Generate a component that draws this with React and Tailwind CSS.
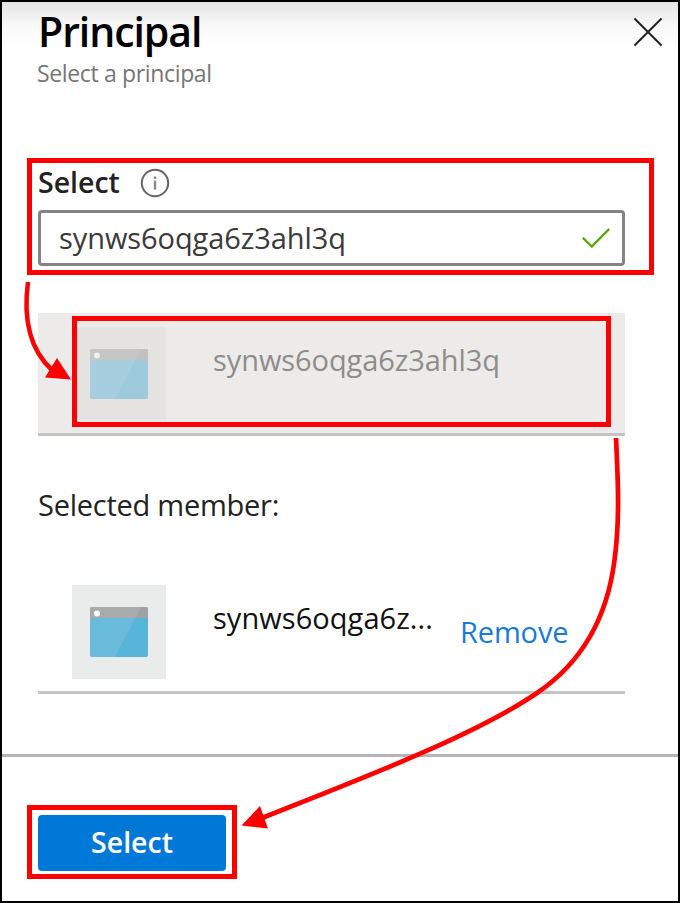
function AppIcon({ className }) {
  return (
    <svg viewBox="0 0 58 50" className={className} fill="none">
      <rect width="58" height="50" rx="2" fill="#59b4d9" />
      <path d="M2 0h54a2 2 0 0 1 2 2v9H0V2a2 2 0 0 1 2-2z" fill="#a0a1a2" />
      <path d="M2 0h49L25 50H2a2 2 0 0 1-2-2V2a2 2 0 0 1 2-2z" fill="#fff" fillOpacity="0.1" />
      <circle cx="7" cy="6.5" r="3" fill="#fff" />
    </svg>
  );
}

function Header() {
  return (
    <header className="flex h-[156px] items-start justify-between bg-linear-to-b from-[#e4e4e4] from-0% via-[#f7f7f7] via-[14%] to-white to-[29%] pt-[2px] pr-[15px] pl-[36px]">
      <div>
        <h1 className="text-[41px] leading-[54px] font-semibold tracking-[-1.050px] text-black">Principal</h1>
        <p className="-ml-[1px] text-[23px] leading-[30px] tracking-[-0.350px] text-[#767676]">Select a principal</p>
      </div>
      <svg viewBox="0 0 30 30" className="mt-[13px] h-[30px] w-[30px]" stroke="#222" strokeWidth="2">
        <path d="M1.500 1.500l27 27M28.500 1.500l-27 27" />
      </svg>
    </header>
  );
}

function SearchField() {
  return (
    <section className="ml-[25px] h-[117px] w-[627px] border-[5px] border-[#f00] px-[6px]">
      <div className="flex items-center">
        <label className="w-[102px] text-[28.500px] leading-[38px] font-semibold text-[#222]">Select</label>
        <svg viewBox="0 0 30 30" className="mt-[1px] h-[30px] w-[30px]">
          <circle cx="15" cy="15" r="13.200" fill="none" stroke="#666" strokeWidth="2" />
          <path d="M15 12.500v9M15 8.500v2.500" stroke="#8b8b8b" strokeWidth="2.500" />
        </svg>
      </div>
      <div className="mt-[9px] flex h-[56px] w-[587px] items-center justify-between rounded-[4px] border-[3px] border-[#868482] pr-[12px] pl-[18px]">
        <span className="text-[29px] leading-[40px] tracking-[-0.080px] text-[#3b3a39]">synws6oqga6z3ahl3q</span>
        <svg viewBox="0 0 28 20" className="h-[20px] w-[28px]" fill="none" stroke="#57a300" strokeWidth="2.300">
          <path d="M0.800 9.700L9.800 18.500L27.200 1" />
        </svg>
      </div>
    </section>
  );
}

function ResultRow() {
  return (
    <section className="mt-[38px] ml-[36px] h-[123px] w-[587px] border-b-[3px] border-[#c4c4c3] bg-[#ecebe9] pt-[3px] pl-[34px]">
      <div className="flex h-[111px] w-[539px] items-start border-[5px] border-[#f00] pt-[6px]">
        <div className="flex h-[93px] w-[89px] items-center bg-[#e4e3e1] pl-[13px]">
          <AppIcon className="h-[50px] w-[58px] opacity-50" />
        </div>
        <span className="mt-[13px] ml-[47px] text-[29px] leading-[40px] tracking-[-0.080px] text-[#8e8d8c]">synws6oqga6z3ahl3q</span>
      </div>
    </section>
  );
}

function SelectedMember() {
  return (
    <section className="mt-[49px] ml-[36px] w-[587px]">
      <h2 className="text-[29px] leading-[40px] tracking-[-0.250px] text-[#222]">Selected member:</h2>
      <div className="mt-[60px] flex h-[109px] items-start border-b-[3px] border-[#c4c4c4] pl-[34px]">
        <div className="flex h-[94px] w-[94px] items-center justify-center bg-[#eaebeb]">
          <AppIcon className="h-[50px] w-[58px]" />
        </div>
        <span className="mt-[13px] ml-[47px] w-[247px] text-[29px] leading-[40px] tracking-[0.050px] text-[#111]">synws6oqga6z...</span>
        <a className="mt-[27px] text-[29px] leading-[40px] tracking-[-0.150px] text-[#1b7ad6]">Remove</a>
      </div>
    </section>
  );
}

function FlowArrows() {
  return (
    <svg viewBox="0 0 680 903" className="pointer-events-none absolute -top-[2px] -left-[2px] h-[903px] w-[680px]" fill="none">
      <path d="M28 282C24 312 27 347 52 370" stroke="#f00" strokeWidth="4.500" />
      <path d="M71 379.500L57 358L45 377.500Z" fill="#f00" />
      <path d="M616 438C618 480 620 520 614.500 560C608 612 587 659 537 693C474 736 360 779 262 818" stroke="#f00" strokeWidth="4.700" />
      <path d="M241.500 825.500L260 806L268 828.500Z" fill="#f00" />
    </svg>
  );
}

export default function App() {
  return (
    <main className="relative flex h-[903px] w-[680px] flex-col overflow-hidden border-2 border-black bg-white font-['Open_Sans','Noto_Sans',sans-serif]">
      <Header />
      <SearchField />
      <ResultRow />
      <SelectedMember />
      <footer className="mt-[60px] grow border-t-[3px] border-[#b5b5b5] pt-[48px] pl-[25px]">
        <div className="h-[74px] w-[210px] border-[5px] border-[#f00] px-[6px] py-[5px]">
          <button className="flex h-[56px] w-[188px] items-center justify-center rounded-[4px] bg-[#0078d7] pb-[2px] text-[28.500px] leading-[36px] font-semibold text-white">
            Select
          </button>
        </div>
      </footer>
      <FlowArrows />
    </main>
  );
}
